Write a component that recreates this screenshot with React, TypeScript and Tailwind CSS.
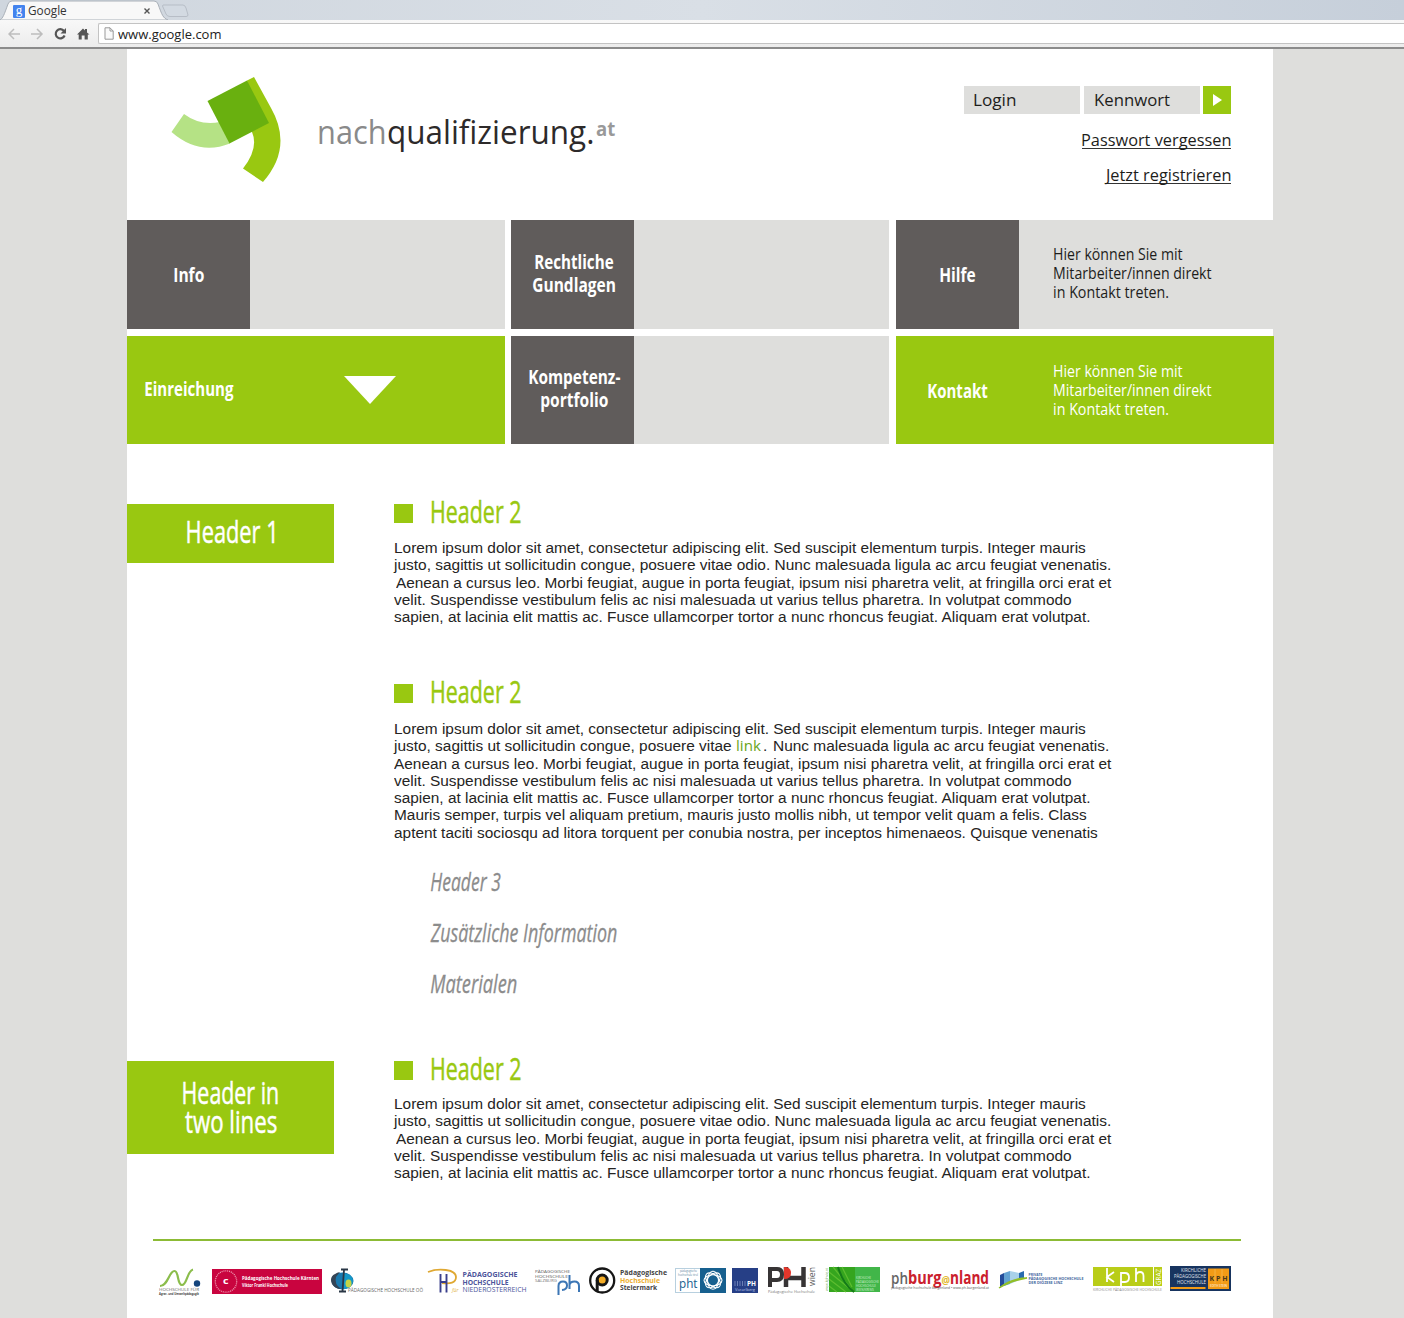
import { useLayoutEffect, useRef } from "react";
import type { ReactNode } from "react";

/** A single line of text whose glyphs are condensed or stretched to an exact width. */
function Fit({ w, className = "", children }: { w: number; className?: string; children: string }) {
  const ref = useRef<HTMLSpanElement>(null);
  useLayoutEffect(() => {
    const el = ref.current;
    if (!el) return;
    const ctx = document.createElement("canvas").getContext("2d");
    if (!ctx) return;
    const cs = getComputedStyle(el);
    ctx.font = `${cs.fontStyle} ${cs.fontWeight} ${cs.fontSize} ${cs.fontFamily}`;
    const m = ctx.measureText(children);
    const s = w / (m.actualBoundingBoxLeft + m.actualBoundingBoxRight);
    el.style.transform = `translateX(${m.actualBoundingBoxLeft * s}px) scaleX(${s})`;
  }, [w, children]);
  return (
    <span className={"block whitespace-nowrap " + className} style={{ width: w }}>
      <span ref={ref} className="inline-block origin-left whitespace-nowrap">
        {children}
      </span>
    </span>
  );
}

function BrowserChrome() {
  return (
    <div className="h-[49px] border-b-2 border-[#8b8b8b] bg-[#f1f1f1]">
      <div className="flex h-5 bg-linear-to-r from-[#cfd6de] via-[#d9dfe6] to-[#c6cfda]">
        <div className="relative flex h-5 w-[190px] items-center pl-[13px]">
          <svg className="absolute left-0 top-0" width="190" height="20" viewBox="0 0 190 20">
            <path d="M0 20 C3 18 4 15 8 4 Q9 1 12 1 H154 Q157 1 158 4 C162 15 163 18 168 20Z" fill="#f8f8f8" stroke="#a9b0b8" strokeWidth="1" />
            <path d="M163 5 H183 Q185 5 186 8 L188 15 Q188 16.500 186 16.500 H170 Q167 16.500 166 14 L162.500 6Z" fill="#d3dae2" stroke="#b3bac3" strokeWidth="0.900" />
          </svg>
          <div className="relative mt-[2px] flex h-[13px] w-3 items-center justify-center rounded-[1px] bg-[#4383ee] font-['Liberation_Serif',serif] text-[13px] leading-none text-white">
            <span className="-mt-1">g</span>
          </div>
          <Fit w={39} className="relative ml-[3px] mt-[2px] font-['Open_Sans',sans-serif] text-[12px] leading-[18px] text-[#333]">Google</Fit>
          <svg className="relative ml-[77px] mt-[2px]" width="6" height="6" viewBox="0 0 6 6">
            <path d="M.5 .5 5.500 5.500M5.500 .5 .5 5.500" stroke="#555" strokeWidth="1.400" />
          </svg>
        </div>
      </div>
      <div className="flex h-[27px] items-center bg-linear-to-b from-[#f8f8f8] to-[#ececec] pl-2">
        <svg width="84" height="16" viewBox="8 26 84 16" fill="none">
          <path d="M20 34H9M14 29 9 34 14 39" stroke="#bdbdbd" strokeWidth="1.500" />
          <path d="M31 34H42M37 29 42 34 37 39" stroke="#bdbdbd" strokeWidth="1.500" />
          <path d="M64 31 A4.600 4.600 0 1 0 64.600 35.500" stroke="#555" strokeWidth="2.200" />
          <path d="M66 28V33.500H60.500Z" fill="#555" />
          <path d="M77 34.500 83 28.500 85 30.400V29H87V32.500L89.500 34.500H87.800V39.500H84.600V35.500H81.700V39.500H78.700V34.500Z" fill="#555" />
        </svg>
        <div className="ml-[6px] flex h-[21px] flex-1 items-center rounded-l-[2px] border border-r-0 border-[#c3c3c3] bg-white pl-[5px]">
          <svg width="10" height="13" viewBox="0 0 10 13">
            <path d="M1 .8H6L9.200 4V12.200H1ZM6 .8V4H9.200" fill="#fafafa" stroke="#999" strokeWidth="1" />
          </svg>
          <Fit w={103} className="ml-[4px] mt-px font-['Open_Sans',sans-serif] text-[13.500px] leading-[19px] text-[#222]">www.google.com</Fit>
        </div>
      </div>
    </div>
  );
}

function Header() {
  return (
    <header className="flex h-[171px] justify-between pr-[42px]">
      <div className="flex">
        <svg className="ml-[43px] mt-[26px]" width="114" height="110" viewBox="170 75 114 110">
          <path d="M184 114 Q200 126 220 122 L230 143.500 Q199 156 171.500 132Z" fill="#b5e285" />
          <path d="M247 80.500 254 77 271 108 Q287 136 276 162 Q271 173 263 182 L243 168.500 Q259 148 252 132Z" fill="#99c811" />
          <path d="M207.500 101 247 80.500 269 123 229.500 143.500Z" fill="#69b00f" />
        </svg>
        <div className="ml-[35px] mt-[61px] flex font-['Open_Sans',sans-serif] text-[32px] leading-[44px]">
          <Fit w={66} className="text-[#8a8a8a]">nach</Fit>
          <Fit w={205} className="ml-[3px] text-[#2d2a2a]">qualifizierung.</Fit>
          <Fit w={19} className="ml-[3px] -mt-[3px] text-[19px] font-bold text-[#999]">at</Fit>
        </div>
      </div>
      <div className="mt-[37px] flex w-[267px] flex-col items-end font-['Open_Sans',sans-serif] text-[17px] text-[#1d1d1b]">
        <div className="flex h-7 w-full leading-7">
          <div className="w-[116px] bg-[#dededc] pl-[10px]"><Fit w={42}>Login</Fit></div>
          <div className="ml-1 w-[116px] bg-[#dededc] pl-[11px]"><Fit w={75}>Kennwort</Fit></div>
          <button className="ml-[3px] flex w-7 items-center justify-center bg-[#99c811]">
            <svg width="9" height="12" viewBox="0 0 9 12"><path d="M0 0 9 6 0 12Z" fill="#fff" /></svg>
          </button>
        </div>
        <a className="mt-[15px] h-5 border-b border-[#333] leading-[22px]"><Fit w={149}>Passwort vergessen</Fit></a>
        <a className="mt-[15px] h-5 border-b border-[#333] leading-[22px]"><Fit w={127} className="-ml-px">Jetzt registrieren</Fit></a>
      </div>
    </header>
  );
}

function Tile({ green, label, children }: { green?: boolean; label: ReactNode; children?: ReactNode }) {
  return (
    <div className={green ? "flex w-[378px] bg-[#99c811]" : "flex w-[378px] bg-[#dededc]"}>
      <div className={"flex w-[123px] flex-col items-center justify-center font-['Open_Sans',sans-serif] text-[20px] font-bold leading-[23px] text-white " + (green ? "" : "bg-[#605c5b]")}>
        {label}
      </div>
      {children}
    </div>
  );
}

function ContactText({ className }: { className: string }) {
  return (
    <div className={"ml-[35px] font-['Open_Sans',sans-serif] text-[15.500px] leading-[19.200px] " + className}>
      <Fit w={129}>Hier können Sie mit</Fit>
      <Fit w={158}>Mitarbeiter/innen direkt</Fit>
      <Fit w={114}>in Kontakt treten.</Fit>
    </div>
  );
}

function Navigation() {
  return (
    <nav className="grid h-[224px] grid-cols-[384px_385px_378px] grid-rows-[109px_108px] gap-y-[7px]">
      <Tile label={<Fit w={30}>Info</Fit>} />
      <Tile label={<><Fit w={78} className="-mt-[3px] ml-[2px]">Rechtliche</Fit><Fit w={82} className="ml-[2px]">Gundlagen</Fit></>} />
      <Tile label={<Fit w={35}>Hilfe</Fit>}><ContactText className="mt-[25px] text-[#1d1d1b]" /></Tile>
      <div className="flex w-[378px] items-center bg-[#99c811] pl-[18px]">
        <Fit w={89} className="-mt-[4px] font-['Open_Sans',sans-serif] text-[20px] font-bold leading-[23px] text-white">Einreichung</Fit>
        <svg className="ml-[110px]" width="52" height="28" viewBox="0 0 52 28"><path d="M0 0H52L26 28Z" fill="#fff" /></svg>
      </div>
      <Tile label={<><Fit w={91} className="-mt-[4px] ml-[4px]">Kompetenz-</Fit><Fit w={67} className="ml-[4px]">portfolio</Fit></>} />
      <Tile green label={<Fit w={60}>Kontakt</Fit>}><ContactText className="mt-[26px] text-white" /></Tile>
    </nav>
  );
}

type Line = [string, number, string?];

const shortText: Line[] = [
  ["Lorem ipsum dolor sit amet, consectetur adipiscing elit. Sed suscipit elementum turpis. Integer mauris", 691, "ml-px"],
  ["justo, sagittis ut sollicitudin congue, posuere vitae odio. Nunc malesuada ligula ac arcu feugiat venenatis.", 717, "-ml-px"],
  ["Aenean a cursus leo. Morbi feugiat, augue in porta feugiat, ipsum nisi pharetra velit, at fringilla orci erat et", 716, "ml-[2px]"],
  ["velit. Suspendisse vestibulum felis ac nisi malesuada ut varius tellus pharetra. In volutpat commodo", 677],
  ["sapien, at lacinia elit mattis ac. Fusce ullamcorper tortor a nunc rhoncus feugiat. Aliquam erat volutpat.", 696],
];

const moreText: Line[] = [
  ["Aenean a cursus leo. Morbi feugiat, augue in porta feugiat, ipsum nisi pharetra velit, at fringilla orci erat et", 718],
  shortText[3],
  shortText[4],
  ["Mauris semper, turpis vel aliquam pretium, mauris justo mollis nibh, ut tempor velit quam a felis. Class", 692, "ml-px"],
  ["aptent taciti sociosqu ad litora torquent per conubia nostra, per inceptos himenaeos. Quisque venenatis", 704],
];

function Lines({ lines }: { lines: Line[] }) {
  return (
    <>
      {lines.map(([text, w, margin], i) => (
        <Fit key={i} w={w} className={margin}>{text}</Fit>
      ))}
    </>
  );
}

const bodyType = "font-['Liberation_Sans',Arial,sans-serif] text-[15.500px] leading-[17.250px] text-[#252423]";

function Heading2() {
  return (
    <div className="flex h-[19px] items-center">
      <div className="size-[19px] bg-[#99c811]" />
      <Fit w={89} className="-mt-[5px] ml-[19px] font-['Open_Sans',sans-serif] text-[31px] leading-[36px] text-[#99c811] [-webkit-text-stroke:0.5px_#99c811]">Header 2</Fit>
    </div>
  );
}

const sideType = "flex w-[207px] shrink-0 flex-col items-center font-['Open_Sans',sans-serif] text-[30.500px] leading-[29px] text-white [-webkit-text-stroke:0.5px_white] bg-[#99c811]";

function Content() {
  return (
    <main className="pt-[60px]">
      <section className="flex h-[180px] items-start">
        <div className={sideType + " h-[59px] pt-[13px]"}><Fit w={87}>Header 1</Fit></div>
        <div className="ml-[60px]">
          <Heading2 />
          <div className={"mt-[16px] " + bodyType}><Lines lines={shortText} /></div>
        </div>
      </section>
      <section className="ml-[267px] h-[377px]">
        <Heading2 />
        <div className={"mt-[17px] " + bodyType}>
          <Lines lines={[shortText[0]]} />
          <div className="flex">
            <Fit w={338} className="-ml-px">justo, sagittis ut sollicitudin congue, posuere vitae</Fit>
            <Fit w={24} className="ml-[6px] font-['Open_Sans',sans-serif] text-[15px] text-[#69a51c]">link</Fit>
            <Fit w={2} className="ml-[3px]">.</Fit>
            <Fit w={334} className="ml-[8px]">Nunc malesuada ligula ac arcu feugiat venenatis.</Fit>
          </div>
          <Lines lines={moreText} />
        </div>
        <div className="ml-[36px] mt-[15px] font-['Open_Sans',sans-serif] text-[25px] italic leading-[51px] text-[#8c8c8c] [-webkit-text-stroke:0.3px_#8c8c8c]">
          <Fit w={70} className="ml-px">Header 3</Fit>
          <Fit w={187}>Zusätzliche Information</Fit>
          <Fit w={86} className="ml-px">Materialen</Fit>
        </div>
      </section>
      <section className="flex h-[178px] items-start">
        <div className={sideType + " h-[93px] pt-[17px]"}>
          <Fit w={95}>Header in</Fit>
          <Fit w={92}>two lines</Fit>
        </div>
        <div className="ml-[60px]">
          <Heading2 />
          <div className={"mt-[15px] " + bodyType}><Lines lines={shortText} /></div>
        </div>
      </section>
    </main>
  );
}

/** One partner logo; the view box shares the footer row's coordinate space. */
function Logo({ x, w, children }: { x: number; w: number; children: ReactNode }) {
  return (
    <svg className="shrink-0 overflow-visible font-['Open_Sans',sans-serif]" width={w} height="34" viewBox={`${x} 1264 ${w} 34`}>
      {children}
    </svg>
  );
}

function T({ x, y, w, s, f, b, children }: { x: number; y: number; w: number; s: number; f: string; b?: boolean; children: string }) {
  return (
    <text x={x} y={y} textLength={w} lengthAdjust="spacingAndGlyphs" fontSize={s} fill={f} fontWeight={b ? 700 : 400}>
      {children}
    </text>
  );
}

function Partners() {
  return (
    <footer className="ml-[26px] w-[1088px] border-t-2 border-[#8cbb35]">
      <div className="mt-[23px] flex">
        <Logo x={153} w={57}>
          <path d="M160 1286C168 1286 169 1271 174.500 1271C179 1271 177 1285 182 1285C187 1285 187 1271 193 1269.500" fill="none" stroke="#8bbd4c" strokeWidth="2.200" />
          <circle cx="197" cy="1283.500" r="3.200" fill="#15457d" />
          <T x={159} y={1291} w={40} s={3.300} f="#666">HOCHSCHULE FÜR</T>
          <T x={159} y={1295} w={40} s={3.300} f="#444" b>Agrar- und Umweltpädagogik</T>
        </Logo>
        <Logo x={210} w={115}>
          <rect x="212" y="1269" width="110" height="25" fill="#c9043f" />
          <circle cx="226" cy="1281.500" r="10.700" fill="none" stroke="#ef9ab2" strokeWidth="1.300" strokeDasharray="1 .9" />
          <T x={223} y={1284.300} w={5.500} s={9} f="#fff" b>c</T>
          <T x={242} y={1280} w={77} s={5.500} f="#fff" b>Pädagogische Hochschule Kärnten</T>
          <T x={242} y={1287} w={46} s={4.600} f="#fff" b>Viktor Frankl Hochschule</T>
        </Logo>
        <Logo x={325} w={100}>
          <ellipse cx="342.500" cy="1281" rx="11" ry="8.500" fill="#1a79ae" />
          <path d="M344 1273Q353 1275 353 1281Q352 1288 344 1289Z" fill="#1498c8" />
          <ellipse cx="348.500" cy="1283.500" rx="3" ry="4" fill="#c4d545" />
          <path d="M340 1272Q328 1275 332 1284Q335 1289 341 1289Q334 1284 336 1277Z" fill="#334456" />
          <path d="M341 1269.500H348M339 1291.500H346M344 1270 342.500 1291" stroke="#293645" strokeWidth="1.800" />
          <T x={348} y={1292} w={75} s={4.500} f="#666">PÄDAGOGISCHE HOCHSCHULE OÖ</T>
        </Logo>
        <Logo x={425} w={107}>
          <path d="M428 1272C438 1268 456 1269 456 1277C456 1283 450 1284 442 1283" fill="none" stroke="#dfa832" strokeWidth="1.800" />
          <path d="M440.500 1274V1292.500M446.500 1274V1292.500M440.500 1282H446.500" stroke="#3a3f8c" strokeWidth="1.900" />
          <T x={462.500} y={1276.800} w={55} s={6.500} f="#4d559b" b>PÄDAGOGISCHE</T>
          <T x={462.500} y={1284.600} w={46} s={6.500} f="#4d559b" b>HOCHSCHULE</T>
          <text x="452" y="1292.300" fontSize="5" fontStyle="italic" fill="#e0b040">für</text>
          <T x={462.500} y={1292.400} w={64} s={6.500} f="#4d559b">NIEDERÖSTERREICH</T>
        </Logo>
        <Logo x={532} w={53}>
          <T x={535} y={1273} w={35} s={4} f="#555">PÄDAGOGISCHE</T>
          <T x={535} y={1277.500} w={33} s={4} f="#555">HOCHSCHULE</T>
          <T x={535} y={1282} w={22} s={4} f="#777">SALZBURG</T>
          <path d="M558.500 1295V1286Q558.500 1281.500 563 1281.500Q567 1281.500 567 1285.500Q567 1289.500 562 1290M569.500 1275V1289M569.500 1285Q570 1281.500 574.500 1281.500Q579 1281.500 579 1286V1292" fill="none" stroke="#3c76b5" strokeWidth="2" />
        </Logo>
        <Logo x={585} w={86}>
          <circle cx="602.200" cy="1280.500" r="12" fill="#fff" stroke="#161616" strokeWidth="2.300" />
          <circle cx="602.200" cy="1280" r="5" fill="#f4ad27" stroke="#161616" strokeWidth="3" />
          <path d="M597.200 1280V1291" stroke="#161616" strokeWidth="3" />
          <T x={620} y={1275.300} w={47} s={6.500} f="#444" b>Pädagogische</T>
          <T x={620} y={1282.800} w={40} s={6.500} f="#eeb031" b>Hochschule</T>
          <T x={620} y={1290.300} w={37} s={6.500} f="#444" b>Steiermark</T>
        </Logo>
        <Logo x={671} w={59}>
          <rect x="675.500" y="1268.500" width="50" height="24" fill="#fff" stroke="#b8d0df" />
          <rect x="700" y="1268" width="26" height="25" fill="#17608f" />
          <T x={680} y={1272} w={17} s={2.700} f="#57819b">pädagogische</T>
          <T x={678} y={1275.500} w={20} s={2.700} f="#57819b">hochschule tirol</T>
          <T x={679} y={1288} w={18.500} s={12.500} f="#17608f">pht</T>
          <g fill="none" stroke="#fff" strokeWidth="1.100">
            <ellipse cx="713" cy="1280.300" rx="9" ry="5.500" />
            <ellipse cx="713" cy="1280.300" rx="9" ry="5.500" transform="rotate(45 713 1280.300)" />
            <ellipse cx="713" cy="1280.300" rx="9" ry="5.500" transform="rotate(90 713 1280.300)" />
            <ellipse cx="713" cy="1280.300" rx="9" ry="5.500" transform="rotate(135 713 1280.300)" />
          </g>
          <circle cx="713" cy="1280.300" r="4" fill="#17608f" />
        </Logo>
        <Logo x={730} w={33}>
          <rect x="732" y="1268" width="26" height="25" fill="#263f86" />
          <path d="M735 1281V1286M737.500 1281V1286M740 1281V1286M742.500 1281V1286M745 1281V1286" stroke="#7e90c3" strokeWidth=".8" />
          <T x={747} y={1286} w={9} s={6.500} f="#fff" b>PH</T>
          <T x={735} y={1290.500} w={20} s={3.500} f="#bac6e6">Vorarlberg</T>
        </Logo>
        <Logo x={763} w={58}>
          <path d="M770 1287V1269H777Q782 1269 782 1274.500T777 1280H770" fill="none" stroke="#373435" strokeWidth="4" />
          <path d="M786 1287V1267M803.500 1287V1267M786 1278H803" stroke="#373435" strokeWidth="4.500" />
          <path d="M784 1267Q791 1267 791 1273T784 1279Z" fill="#e3362b" />
          <text transform="translate(815 1286) rotate(-90)" fontSize="9" textLength="19" lengthAdjust="spacingAndGlyphs" fill="#555">wien</text>
          <T x={768} y={1292.500} w={47} s={4} f="#777">Pädagogische Hochschule</T>
        </Logo>
        <Logo x={821} w={66}>
          <text transform="translate(828 1291) rotate(-90)" fontSize="3.500" textLength="23" lengthAdjust="spacingAndGlyphs" fill="#70a960">www.kphvie.at</text>
          <rect x="829" y="1267" width="26" height="25" fill="#35a51e" />
          <path d="M829 1272 854 1292M833 1267 851 1289M842 1267 852 1287M829 1279 846 1292M829 1286 837 1292" stroke="#5dbd30" strokeWidth="1.200" />
          <path d="M838 1267Q843 1284 854 1292" fill="none" stroke="#147b19" strokeWidth="2" />
          <rect x="855" y="1267" width="25" height="25" fill="#41b649" />
          <T x={856} y={1278.500} w={15} s={3} f="#d3f0d1">KIRCHLICHE</T>
          <T x={856} y={1282.700} w={23} s={3} f="#d3f0d1">PÄDAGOGISCHE</T>
          <T x={856} y={1286.900} w={20} s={3} f="#d3f0d1">HOCHSCHULE</T>
          <T x={856} y={1291} w={18} s={3} f="#d3f0d1">WIEN/KREMS</T>
        </Logo>
        <Logo x={887} w={108}>
          <text x="891" y="1284" textLength="17" lengthAdjust="spacingAndGlyphs" fontSize="17" fontWeight="600" fill="#666">ph</text>
          <T x={908} y={1284} w={33.500} s={17} f="#cb202d" b>burg</T>
          <T x={941.500} y={1283.500} w={8.500} s={11} f="#e3b82c" b>@</T>
          <T x={950} y={1284} w={39} s={17} f="#cb202d" b>nland</T>
          <T x={891} y={1289} w={98} s={3.600} f="#555">pädagogische hochschule burgenland • www.ph-burgenland.at</T>
        </Logo>
        <Logo x={995} w={94}>
          <path d="M1000 1275 1004 1273V1285L1000 1288Z" fill="#234b99" />
          <path d="M1004 1273 1010 1271V1284L1004 1286Z" fill="#62a2d2" />
          <path d="M1010 1271 1019 1273V1280L1010 1284Z" fill="#a9d1e9" />
          <path d="M1019 1273 1024 1271V1278L1019 1280Z" fill="#286baf" />
          <path d="M999 1288Q1012 1278 1027 1278Q1010 1281 999 1288Z" fill="#92bf27" stroke="#92bf27" strokeWidth="1.300" />
          <T x={1028.500} y={1276} w={14} s={3} f="#42669e" b>PRIVATE</T>
          <T x={1028.500} y={1280} w={55} s={3} f="#42669e" b>PÄDAGOGISCHE HOCHSCHULE</T>
          <T x={1028.500} y={1284} w={34} s={3} f="#42669e" b>DER DIÖZESE LINZ</T>
        </Logo>
        <Logo x={1089} w={77}>
          <rect x="1093" y="1267" width="60" height="19" fill="#b9cd18" />
          <rect x="1154" y="1267" width="8" height="19" fill="#b9cd18" />
          <path d="M1107 1268V1282M1114 1272 1107 1277 1114 1282M1121 1286V1273H1125Q1129 1273 1129 1277.500T1125 1282H1121M1136 1268V1282M1136 1275Q1137 1272 1140 1272Q1143.500 1272 1143.500 1276V1282" fill="none" stroke="#fff" strokeWidth="1.800" />
          <text transform="translate(1160.500 1285) rotate(-90)" fontSize="6.500" textLength="16" lengthAdjust="spacingAndGlyphs" fill="#fff">GRAZ</text>
          <T x={1093} y={1291} w={69} s={3.500} f="#888">KIRCHLICHE PÄDAGOGISCHE HOCHSCHULE</T>
        </Logo>
        <Logo x={1166} w={68}>
          <rect x="1170" y="1266" width="61" height="25" fill="#17345f" />
          <rect x="1208" y="1268.500" width="21" height="20.500" fill="#f39b16" />
          <path d="M1215 1269V1283M1222 1269V1283" stroke="#f8bc58" strokeWidth=".7" />
          <rect x="1170.500" y="1287" width="35" height="2" fill="#f39b16" />
          <T x={1181} y={1271.800} w={25} s={4.600} f="#e1e7ee">KIRCHLICHE</T>
          <T x={1174} y={1277.800} w={32} s={4.600} f="#e1e7ee">PÄDAGOGISCHE</T>
          <T x={1177} y={1283.800} w={29} s={4.600} f="#e1e7ee">HOCHSCHULE</T>
          <T x={1209.500} y={1281} w={18} s={7} f="#49371c" b>K P H</T>
          <T x={1210} y={1287} w={17} s={3} f="#fff">EDITH STEIN</T>
        </Logo>
      </div>
    </footer>
  );
}

export default function App() {
  return (
    <div className="h-[1318px] w-[1404px] overflow-hidden bg-[#dededc]">
      <BrowserChrome />
      <div className="ml-[127px] h-[1269px] w-[1146px] bg-white">
        <Header />
        <Navigation />
        <Content />
        <Partners />
      </div>
    </div>
  );
}
